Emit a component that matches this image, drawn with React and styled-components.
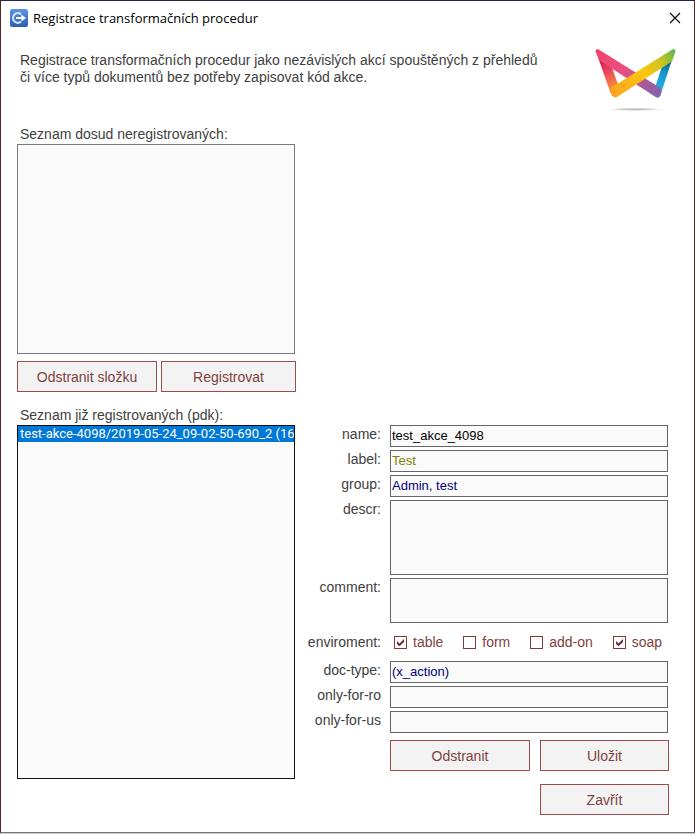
import React, { useState } from 'react';
import styled, { createGlobalStyle } from 'styled-components';

const GlobalStyle = createGlobalStyle`
  * {
    box-sizing: border-box;
  }

  body {
    margin: 0;
    background: #c8c8c8;
    font-family: "Liberation Sans", Arial, sans-serif;
    font-size: 13px;
    color: #404040;
  }
`;

// Styled components
const Dialog = styled.div`
  display: flex;
  flex-direction: column;
  min-height: calc(100vh - 1px);
  border: 1px solid #55292c;
  border-top-color: #23263a;
  border-bottom-color: #777777;
  background: #ffffff;
`;

const TitleBar = styled.header`
  display: flex;
  align-items: center;
  height: 34px;
  padding: 0 13px 0 9px;
`;

const DialogTitle = styled.h1`
  flex: 1;
  margin: 0 0 0 5px;
  font-family: "Open Sans", "Segoe UI", sans-serif;
  font-size: 13px;
  font-weight: 400;
  color: #000000;
`;

const CloseButton = styled.button`
  display: flex;
  padding: 0;
  border: none;
  background: none;
  cursor: pointer;
`;

const Content = styled.main`
  flex: 1;
  display: flex;
  flex-direction: column;
  padding: 13px 25px 16px 16px;
`;

const Intro = styled.div`
  display: flex;
  justify-content: space-between;
  align-items: flex-start;
  height: 78px;
  margin-right: -9px;
`;

const IntroText = styled.p`
  max-width: 528px;
  margin: 4px 0 0 3px;
  font-size: 14px;
  line-height: 17px;
`;

const Columns = styled.div`
  flex: ${({ $grow }) => ($grow ? 1 : 'none')};
  display: grid;
  grid-template-columns: minmax(0, 279fr) minmax(0, 373fr);
`;

const ListColumn = styled.section`
  display: flex;
  flex-direction: column;
  padding-bottom: ${({ $bottom }) => $bottom}px;
`;

const ListLabel = styled.label`
  height: 18px;
  padding-left: 3px;
  font-size: 14px;
  line-height: 17px;
`;

const ListBox = styled.select`
  flex: 1;
  min-height: 210px;
  margin: 0 1px 0 0;
  padding: 0;
  overflow: hidden;
  border: 1px solid ${({ $active }) => ($active ? '#111111' : '#7a7a7a')};
  border-radius: 0;
  outline: none;
  background: #fafafa;
  font-family: Roboto, "Liberation Sans", sans-serif;
  font-size: 13px;

  option {
    min-height: 16px;
    padding: 0 2px;
    line-height: 16px;
  }

  option:checked {
    background: #0078d7 linear-gradient(#0078d7, #0078d7);
    color: #ffffff;
    -webkit-text-fill-color: #ffffff;
  }
`;

const ListButtons = styled.div`
  display: grid;
  grid-template-columns: 140fr 135fr;
  gap: 4px;
  margin-top: 7px;
`;

const Button = styled.button`
  height: 31px;
  padding: 0;
  border: 1px solid #a04c4f;
  border-radius: 0;
  background: #f3f3f3;
  font-family: inherit;
  font-size: 14px;
  color: #813f40;
  cursor: pointer;

  &:hover {
    background: #e8e8e8;
  }
`;

const Form = styled.form`
  padding-top: 18px;
`;

const FormRow = styled.div`
  display: grid;
  grid-template-columns: 85px minmax(0, 1fr);
  column-gap: 9px;
  margin-bottom: 3px;
`;

const FieldLabel = styled.label`
  justify-self: end;
  font-size: 14px;
  line-height: 19px;
  white-space: nowrap;
`;

const Input = styled.input`
  height: 22px;
  margin-right: 1px;
  padding: 0 1px 2px;
  border: 1px solid #666666;
  border-radius: 0;
  outline: none;
  background: #fafafa;
  font-family: inherit;
  font-size: 13px;
  color: ${({ $color }) => $color || '#000000'};
`;

const TextArea = styled.textarea`
  height: ${({ $height }) => $height}px;
  margin-right: 1px;
  padding: 2px 1px;
  border: 1px solid #666666;
  border-radius: 0;
  outline: none;
  resize: none;
  background: #fafafa;
  font-family: inherit;
  font-size: 13px;
`;

const EnvironmentRow = styled(FormRow)`
  align-items: center;
  height: 32px;
`;

const CheckGroup = styled.div`
  display: flex;
  justify-content: space-between;
  padding: 0 7px 0 4px;
`;

const CheckLabel = styled.label`
  position: relative;
  display: flex;
  align-items: center;
  gap: 6px;
  font-size: 14px;
  line-height: 19px;
  color: #813f40;

  svg {
    position: absolute;
    left: 0;
    pointer-events: none;
  }
`;

const CheckInput = styled.input`
  appearance: none;
  width: 13px;
  height: 13px;
  margin: 0;
  border: 1px solid #7c3a3b;
  background: #ffffff;
`;

const FormButtons = styled.div`
  display: grid;
  grid-template-columns: 140fr 129fr;
  gap: 13px 10px;
  margin: 7px 0 0 94px;
`;

const SubmitClose = styled(Button)`
  grid-column: 2;
`;

const AppIcon = () => (
  <svg width="18" height="18" viewBox="0 0 18 18" aria-hidden="true">
    <defs>
      <linearGradient id="iconBlue" x1="0" y1="0" x2="0" y2="1">
        <stop offset="0" stopColor="#5b96e6" />
        <stop offset="1" stopColor="#2c5cb4" />
      </linearGradient>
    </defs>
    <rect width="18" height="18" rx="2.5" fill="url(#iconBlue)" />
    <path d="M11 5.4A4.8 4.8 0 1 0 11 12.6" fill="none" stroke="#d3e2f8" strokeWidth="2.2" />
    <path d="M6 9H13" stroke="#ffffff" strokeWidth="2" />
    <path d="M11.4 5.4L16 9L11.4 12.6Z" fill="#ffffff" />
  </svg>
);

const CloseIcon = () => (
  <svg width="12" height="12" viewBox="0 0 12 12" aria-hidden="true">
    <path d="M1 1L11 11M11 1L1 11" stroke="#000000" strokeWidth="1.1" />
  </svg>
);

const CheckMark = () => (
  <svg width="13" height="13" viewBox="0 0 13 13" aria-hidden="true">
    <path d="M3 5L5.5 7.5L10 3V6L5.5 10.2L3 8Z" fill="#6d2b2f" />
  </svg>
);

const Logo = () => (
  <svg width="84" height="64" viewBox="42 144 252 192" aria-hidden="true">
    <defs>
      <linearGradient id="leftLeg" x1="70" y1="185" x2="105" y2="275" gradientUnits="userSpaceOnUse">
        <stop offset="0" stopColor="#d81f5a" />
        <stop offset="0.45" stopColor="#f0565a" />
        <stop offset="0.85" stopColor="#f68a35" />
        <stop offset="1" stopColor="#e57d22" />
      </linearGradient>
      <linearGradient id="rightLeg" x1="268" y1="185" x2="235" y2="270" gradientUnits="userSpaceOnUse">
        <stop offset="0" stopColor="#0b5f85" />
        <stop offset="0.4" stopColor="#1795c4" />
        <stop offset="1" stopColor="#22b5e6" />
      </linearGradient>
      <linearGradient id="pinkBand" x1="50" y1="155" x2="240" y2="285" gradientUnits="userSpaceOnUse">
        <stop offset="0" stopColor="#f0446f" />
        <stop offset="0.4" stopColor="#ec4f7f" />
        <stop offset="0.65" stopColor="#b8588f" />
        <stop offset="1" stopColor="#8264b0" />
      </linearGradient>
      <linearGradient id="yellowBand" x1="100" y1="285" x2="285" y2="155" gradientUnits="userSpaceOnUse">
        <stop offset="0" stopColor="#fba51f" />
        <stop offset="0.5" stopColor="#fdc50d" />
        <stop offset="0.77" stopColor="#cfc422" />
        <stop offset="1" stopColor="#5cba47" />
      </linearGradient>
      <radialGradient id="logoShadow">
        <stop offset="0" stopColor="#bdbdbd" />
        <stop offset="0.6" stopColor="#d6d6d6" />
        <stop offset="1" stopColor="#ffffff" />
      </radialGradient>
    </defs>
    <path d="M48 155L62 178L95 200L117 262L108 280L92 280Z" fill="url(#leftLeg)" />
    <path d="M284 155L274 182L245 202L224 266L243 280Z" fill="url(#rightLeg)" />
    <path d="M47 156Q45 146 55 148L238 262Q246 268 244 278L242 286Q238 296 228 292L60 182Z" fill="url(#pinkBand)" />
    <path d="M278 148Q288 146 286 156L276 184L112 290Q101 296 95 286L91 272Q91 266 96 262Z" fill="url(#yellowBand)" />
    <ellipse cx="167" cy="328" rx="82" ry="5" fill="url(#logoShadow)" />
  </svg>
);

const textFields = [
  { name: 'name', label: 'name:', value: 'test_akce_4098' },
  { name: 'label', label: 'label:', value: 'Test', color: '#808000' },
  { name: 'group', label: 'group:', value: 'Admin, test', color: '#000080' },
];

const areaFields = [
  { name: 'descr', label: 'descr:', height: 75 },
  { name: 'comment', label: 'comment:', height: 45 },
];

const typeFields = [
  { name: 'docType', label: 'doc-type:', value: '(x_action)', color: '#000080' },
  { name: 'onlyForRo', label: 'only-for-ro', value: '' },
  { name: 'onlyForUs', label: 'only-for-us', value: '' },
];

const TextField = ({ field }) => (
  <FormRow>
    <FieldLabel htmlFor={field.name}>{field.label}</FieldLabel>
    <Input id={field.name} name={field.name} defaultValue={field.value} $color={field.color} />
  </FormRow>
);

const App = () => {
  const [environment, setEnvironment] = useState({
    table: true,
    form: false,
    'add-on': false,
    soap: true,
  });

  const toggleEnvironment = (key) => {
    setEnvironment({ ...environment, [key]: !environment[key] });
  };

  return (
    <>
      <GlobalStyle />
      <Dialog role="dialog" aria-labelledby="dialogTitle">
        <TitleBar>
          <AppIcon />
          <DialogTitle id="dialogTitle">Registrace transformačních procedur</DialogTitle>
          <CloseButton type="button" aria-label="Zavřít">
            <CloseIcon />
          </CloseButton>
        </TitleBar>

        <Content>
          <Intro>
            <IntroText>
              Registrace transformačních procedur jako nezávislých akcí spouštěných z přehledů
              či více typů dokumentů bez potřeby zapisovat kód akce.
            </IntroText>
            <Logo />
          </Intro>

          <Columns>
            <ListColumn $bottom={15}>
              <ListLabel htmlFor="unregistered">Seznam dosud neregistrovaných:</ListLabel>
              <ListBox id="unregistered" size={12} />
              <ListButtons>
                <Button type="button">Odstranit složku</Button>
                <Button type="button">Registrovat</Button>
              </ListButtons>
            </ListColumn>
          </Columns>

          <Columns $grow>
            <ListColumn $bottom={37}>
              <ListLabel htmlFor="registered">Seznam již registrovaných (pdk):</ListLabel>
              <ListBox id="registered" size={20} defaultValue="690_2" $active>
                <option value="690_2">test-akce-4098/2019-05-24_09-02-50-690_2 (16)</option>
              </ListBox>
            </ListColumn>

            <Form onSubmit={(e) => e.preventDefault()}>
              {textFields.map(field => (
                <TextField key={field.name} field={field} />
              ))}
              {areaFields.map(field => (
                <FormRow key={field.name}>
                  <FieldLabel htmlFor={field.name}>{field.label}</FieldLabel>
                  <TextArea id={field.name} name={field.name} $height={field.height} />
                </FormRow>
              ))}
              <EnvironmentRow role="group" aria-labelledby="environmentLabel">
                <FieldLabel as="span" id="environmentLabel">enviroment:</FieldLabel>
                <CheckGroup>
                  {Object.keys(environment).map(key => (
                    <CheckLabel key={key}>
                      <CheckInput
                        type="checkbox"
                        checked={environment[key]}
                        onChange={() => toggleEnvironment(key)}
                      />
                      {environment[key] && <CheckMark />}
                      {key}
                    </CheckLabel>
                  ))}
                </CheckGroup>
              </EnvironmentRow>
              {typeFields.map(field => (
                <TextField key={field.name} field={field} />
              ))}
              <FormButtons>
                <Button type="button">Odstranit</Button>
                <Button type="submit">Uložit</Button>
                <SubmitClose type="button">Zavřít</SubmitClose>
              </FormButtons>
            </Form>
          </Columns>
        </Content>
      </Dialog>
    </>
  );
}

export default App;
